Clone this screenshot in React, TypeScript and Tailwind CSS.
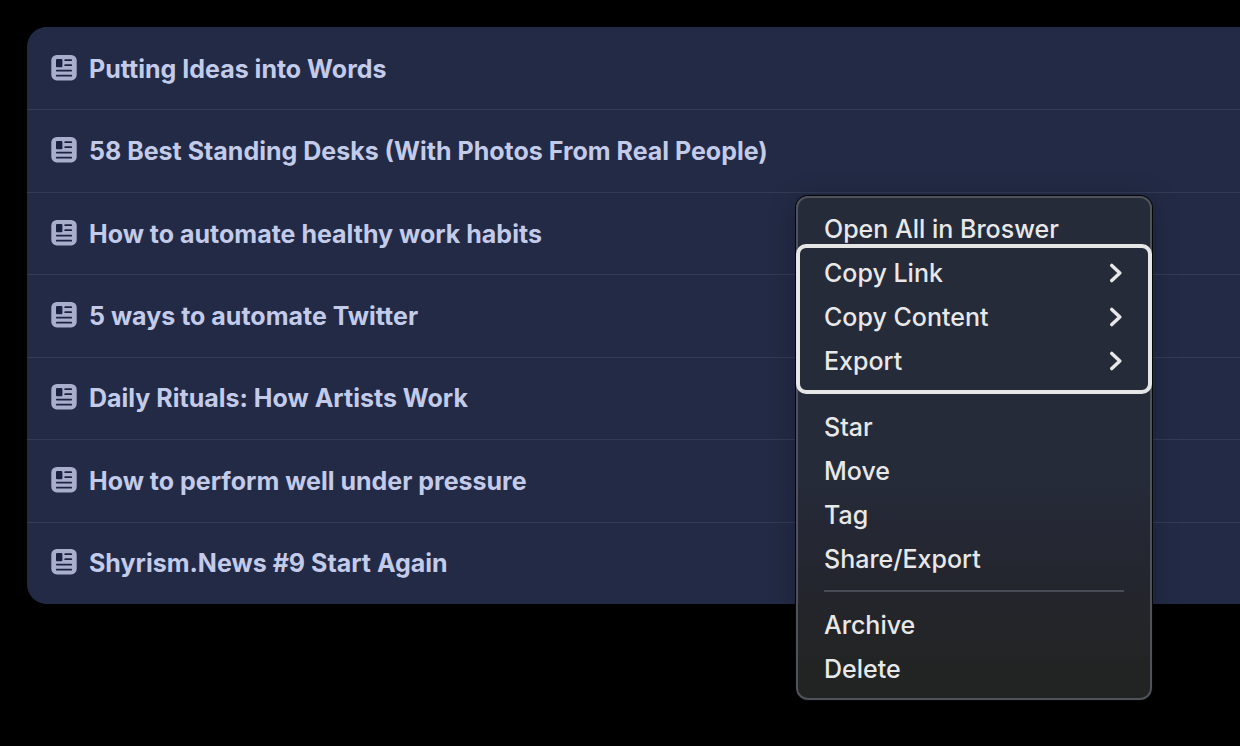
import React from 'react';

const ARTICLES = [
  'Putting Ideas into Words',
  '58 Best Standing Desks (With Photos From Real People)',
  'How to automate healthy work habits',
  '5 ways to automate Twitter',
  'Daily Rituals: How Artists Work',
  'How to perform well under pressure',
  'Shyrism.News #9 Start Again',
];

const COPY_ITEMS = ['Copy Link', 'Copy Content', 'Export'];
const EDIT_ITEMS = ['Star', 'Move', 'Tag', 'Share/Export'];
const REMOVE_ITEMS = ['Archive', 'Delete'];

const ArticleIcon: React.FC = () => (
  <svg viewBox="0 0 26 26" className="w-[26px] h-[26px] shrink-0" aria-hidden="true">
    <rect x="0.3" width="25.4" height="25.4" rx="5.5" fill="#a8aecb" />
    <rect x="5" y="4" width="6.4" height="8.2" rx="1" fill="#1b2342" />
    <g stroke="#1b2342" strokeWidth="1.8" strokeLinecap="round">
      <path d="M14.2 5.2h6" />
      <path d="M14.2 10.2h6" />
      <path d="M5.8 15.6h14.4" />
      <path d="M5.8 20.7h14.4" />
    </g>
  </svg>
);

const Chevron: React.FC = () => (
  <svg viewBox="0 0 14 20" className="w-[14px] h-5" fill="none" aria-hidden="true">
    <path
      d="M1.8 2.4 9.8 10l-8 7.6"
      stroke="#e8e8e9"
      strokeWidth="3.4"
      strokeLinecap="round"
      strokeLinejoin="round"
    />
  </svg>
);

const MenuItem: React.FC<{ label: string; submenu?: boolean }> = ({ label, submenu }) => (
  <button
    type="button"
    role="menuitem"
    aria-haspopup={submenu ? 'menu' : undefined}
    className="flex h-11 w-full items-center justify-between px-[26px] text-left"
  >
    <span>{label}</span>
    {submenu && <Chevron />}
  </button>
);

const Separator: React.FC = () => (
  <div role="separator" className="flex h-[22px] items-center px-[26px] pb-0.5">
    <div className="h-0.5 w-full bg-[#494b56]" />
  </div>
);

const ContextMenu: React.FC = () => (
  <div
    role="menu"
    className="absolute left-[796px] top-[196px] w-[356px] rounded-xl border-2 border-[#4f5258] bg-linear-to-b from-[#262b3a] from-55% via-[#24262f] via-75% to-[#222423] to-95% pb-[7px] pt-[9px] text-[25px] font-medium leading-8 text-[#e8e8e9] shadow-[0_0_0_1px_#05060a,0_4px_28px_rgba(0,0,0,0.25)]"
  >
    <MenuItem label="Open All in Broswer" />
    <div role="group" className="relative">
      {COPY_ITEMS.map((label) => (
        <MenuItem key={label} label={label} submenu />
      ))}
      {/* Highlight ring around the copy actions */}
      <div className="pointer-events-none absolute -inset-x-0.5 -bottom-[11px] -top-[7px] rounded-[10px] border-4 border-[#e6e6e7]" />
    </div>
    <div className="h-[22px]" />
    {EDIT_ITEMS.map((label) => (
      <MenuItem key={label} label={label} />
    ))}
    <Separator />
    {REMOVE_ITEMS.map((label) => (
      <MenuItem key={label} label={label} />
    ))}
  </div>
);

export default function App() {
  return (
    <main className="relative min-h-screen overflow-hidden bg-black pl-[27px] pt-[27px] font-['Inter','Liberation_Sans',sans-serif]">
      <ul className="grid min-h-[577px] auto-rows-fr overflow-hidden rounded-l-[20px] bg-[#232a45]">
        {ARTICLES.map((title) => (
          <li key={title} className="border-t border-[#333b55] first:border-[#232a45]">
            <a
              href="#"
              className="flex h-full items-center gap-3 pb-0.5 pl-6 text-[25px] font-bold leading-8 text-[#c3cbea]"
            >
              <ArticleIcon />
              <span className="pt-0.5">{title}</span>
            </a>
          </li>
        ))}
      </ul>
      <ContextMenu />
    </main>
  );
}
